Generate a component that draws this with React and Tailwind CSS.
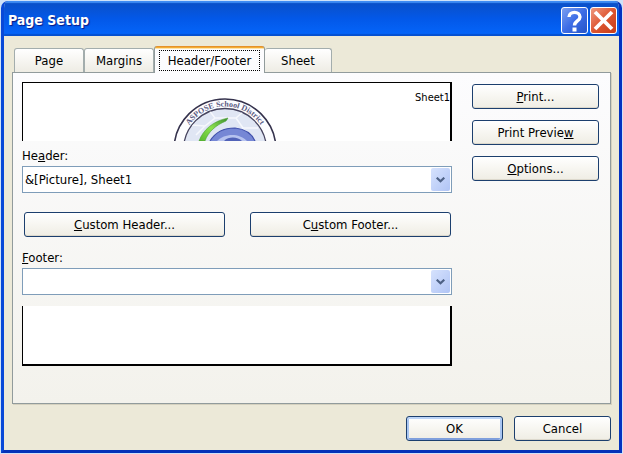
import React from "react";

function PushButton({ children, className = "", primary = false }) {
  const ring = primary
    ? "shadow-[inset_0_2px_0_#bcd4f6,inset_2px_0_0_#a9c6f2,inset_-2px_0_0_#a9c6f2,inset_0_-2px_0_#7f9fdc]"
    : "shadow-[inset_0_-1px_0_#dcd8cc]";
  return (
    <button
      type="button"
      className={`h-[25px] rounded-[3px] border border-[#1c3f6e] bg-linear-to-b from-white via-[#f7f6f1] to-[#efede4] text-center leading-[22px] whitespace-nowrap ${ring} ${className}`}
    >
      {children}
    </button>
  );
}

function Tab({ children, className = "", active = false }) {
  if (active) {
    return (
      <button
        type="button"
        role="tab"
        aria-selected="true"
        className={`z-10 -mb-px h-[27px] rounded-t-[3px] bg-linear-to-b from-[#e5912c] from-[1px] via-[#ffc73c] via-[2px] to-[#fcfcfe] to-[3px] border-x border-x-[#919b9c] px-1 pt-[3px] ${className}`}
      >
        <span className="mt-px mb-[2px] block h-[21px] border border-dotted border-black leading-[19px]">
          {children}
        </span>
      </button>
    );
  }
  return (
    <button
      type="button"
      role="tab"
      aria-selected="false"
      className={`h-6 rounded-t-[3px] border-x border-t border-[#a3adad] bg-linear-to-b from-white to-[#eeece4] ${className}`}
    >
      {children}
    </button>
  );
}

function ComboBox({ id, value }) {
  return (
    <div className="relative">
      <select
        id={id}
        defaultValue={value}
        className="block h-[27px] w-full appearance-none border border-[#7f9db9] bg-white pr-6 pl-[2px] outline-none"
      >
        <option value={value}>{value}</option>
      </select>
      <span className="pointer-events-none absolute top-[2px] right-[2px] flex h-[23px] w-[19px] items-center justify-center rounded-[2px] bg-linear-to-br from-[#d6e2fd] to-[#b0c4f5]">
        <svg width="9" height="6" viewBox="0 0 9 6" aria-hidden="true">
          <path d="M0.700 0.700 L4.500 4.300 L8.300 0.700" fill="none" stroke="#4d6185" strokeWidth="2.200" />
        </svg>
      </span>
    </div>
  );
}

function SchoolSeal() {
  return (
    <svg width="106" height="44" viewBox="0 0 106 44" className="block" role="img" aria-label="ASPOSE School District">
      <defs>
        <path id="seal-arc" d="M9.500 53 A43.500 43.500 0 0 1 96.500 53" />
        <clipPath id="seal-inner">
          <circle cx="53" cy="53" r="41" />
        </clipPath>
        <linearGradient id="seal-green" x1="0" y1="1" x2="1" y2="0">
          <stop offset="0" stopColor="#57b82e" />
          <stop offset="0.500" stopColor="#8be14e" />
          <stop offset="1" stopColor="#3d8f2c" />
        </linearGradient>
      </defs>
      <circle cx="53" cy="53" r="51" fill="#fdfdff" stroke="#35324d" strokeWidth="1.600" />
      <circle cx="53" cy="53" r="41.500" fill="#e0e6f4" stroke="#45435e" strokeWidth="1.300" />
      <g clipPath="url(#seal-inner)" stroke="#f6f8fd" strokeWidth="1.500" fill="none">
        <path d="M37 13 L43 21 L33 29 L20 28 M43 21 L64 21 L72 14 M64 21 L71 31 L86 31 M71 31 L66 39 M24 38 L33 29" />
      </g>
      <path d="M27 44 C31 33 41 24 56 21 L54 24 C44 28 36 35 33 44 Z" fill="url(#seal-green)" stroke="#4c9f37" strokeWidth="0.600" />
      <path d="M38 44 C44 34 53 31 63 31 C73 32 80 37 83 44 Z" fill="#7687d5" />
      <path d="M38 44 C44 34 53 31 63 31 C73 32 80 37 83 44" fill="none" stroke="#4252ad" strokeWidth="1.200" />
      <path d="M45 44 C52 37 66 35 75 44 Z" fill="#b6c2ef" />
      <path d="M52 44 C57 39 66 40 70 44 Z" fill="#5162b8" />
      <text fill="#5b5b82" fontFamily="'Liberation Serif', serif" fontSize="8" fontWeight="700" textAnchor="middle">
        <textPath href="#seal-arc" startOffset="50%">ASPOSE School District</textPath>
      </text>
    </svg>
  );
}

function TitleBar() {
  const box = "flex size-[27px] items-center justify-center rounded-[3px] border border-white";
  return (
    <header className="flex h-[35px] items-center bg-linear-to-b from-[#0b4fc4] via-[#0358e8] to-[#0566fb] pt-1 pr-[2px] pl-1 shadow-[inset_0_2px_1px_#3f8cf3,inset_0_-2px_1px_#0550d0]">
      <h1 className="flex-1 font-['DejaVu_Sans_Condensed','DejaVu_Sans',sans-serif] text-[14px] font-bold text-white [text-shadow:1px_1px_1px_#0a1883]">
        Page Setup
      </h1>
      <div className="flex gap-[2px]">
        <button type="button" aria-label="Help" className={`${box} bg-linear-to-br from-[#7d9ff0] via-[#3d6de6] to-[#2554c8]`}>
          <svg width="17" height="22" viewBox="0 0 17 22" aria-hidden="true">
            <path d="M3 7 C3 0.800 14 0.800 14 7 C14 11 8.500 11 8.500 15.500" fill="none" stroke="#fff" strokeWidth="3.400" />
            <rect x="6.500" y="17.500" width="4" height="4" fill="#fff" />
          </svg>
        </button>
        <button type="button" aria-label="Close" className={`${box} bg-linear-to-br from-[#ee987e] via-[#dd5530] to-[#c63c17]`}>
          <svg width="21" height="21" viewBox="0 0 21 21" aria-hidden="true">
            <path d="M2 2 L19 19 M19 2 L2 19" stroke="#fff" strokeWidth="3.800" />
          </svg>
        </button>
      </div>
    </header>
  );
}

export default function App() {
  return (
    <main className="min-h-screen bg-[#cfe2f8] p-px font-['DejaVu_Sans_Condensed','DejaVu_Sans',sans-serif] text-[13px] text-black">
      <section className="overflow-hidden rounded-t-[7px] border-3 border-t-0 border-[#0849d8] border-r-[#0432c0] border-b-[#0432b8] bg-[#ece9d8]">
        <TitleBar />
        <div className="px-2 pt-[10px] pb-[9px]">
          <div role="tablist" className="flex items-end px-[2px]">
            <Tab className="w-[70px]">Page</Tab>
            <Tab className="w-[70px]">Margins</Tab>
            <Tab className="w-[111px]" active>Header/Footer</Tab>
            <Tab className="w-[67px] border-l-0">Sheet</Tab>
          </div>
          <div className="flex gap-5 border border-[#919b9c] bg-linear-to-b from-[#fcfcfe] to-[#f3f2ec] pt-[9px] pr-[11px] pb-[37px] pl-[9px] shadow-[1px_1px_0_#d5d1bf]">
            <div className="min-w-0 flex-1">
              <div className="relative flex h-[59px] items-end justify-center overflow-hidden border-t border-r-2 border-l border-black bg-white pr-6">
                <SchoolSeal />
                <span className="absolute top-2 right-0 text-[11px] leading-[14px]">Sheet1</span>
              </div>
              <label htmlFor="header" className="mt-[7px] mb-[2px] block leading-4">
                He<u>a</u>der:
              </label>
              <ComboBox id="header" value="&[Picture], Sheet1" />
              <div className="mt-[19px] mr-px ml-[2px] flex gap-[25px]">
                <PushButton className="flex-1"><u>C</u>ustom Header...</PushButton>
                <PushButton className="flex-1">C<u>u</u>stom Footer...</PushButton>
              </div>
              <label htmlFor="footer" className="mt-[13px] mb-[2px] block leading-4">
                <u>F</u>ooter:
              </label>
              <ComboBox id="footer" value="" />
              <div className="mt-[11px] h-[60px] border-r-2 border-b-2 border-l border-black bg-white" />
            </div>
            <div className="flex w-[127px] flex-col gap-[11px] pt-[2px]">
              <PushButton><u>P</u>rint...</PushButton>
              <PushButton>Print Previe<u>w</u></PushButton>
              <PushButton><u>O</u>ptions...</PushButton>
            </div>
          </div>
          <div className="mt-3 flex justify-end gap-[11px]">
            <PushButton className="w-[97px]" primary>OK</PushButton>
            <PushButton className="w-[97px]">Cancel</PushButton>
          </div>
        </div>
      </section>
    </main>
  );
}
